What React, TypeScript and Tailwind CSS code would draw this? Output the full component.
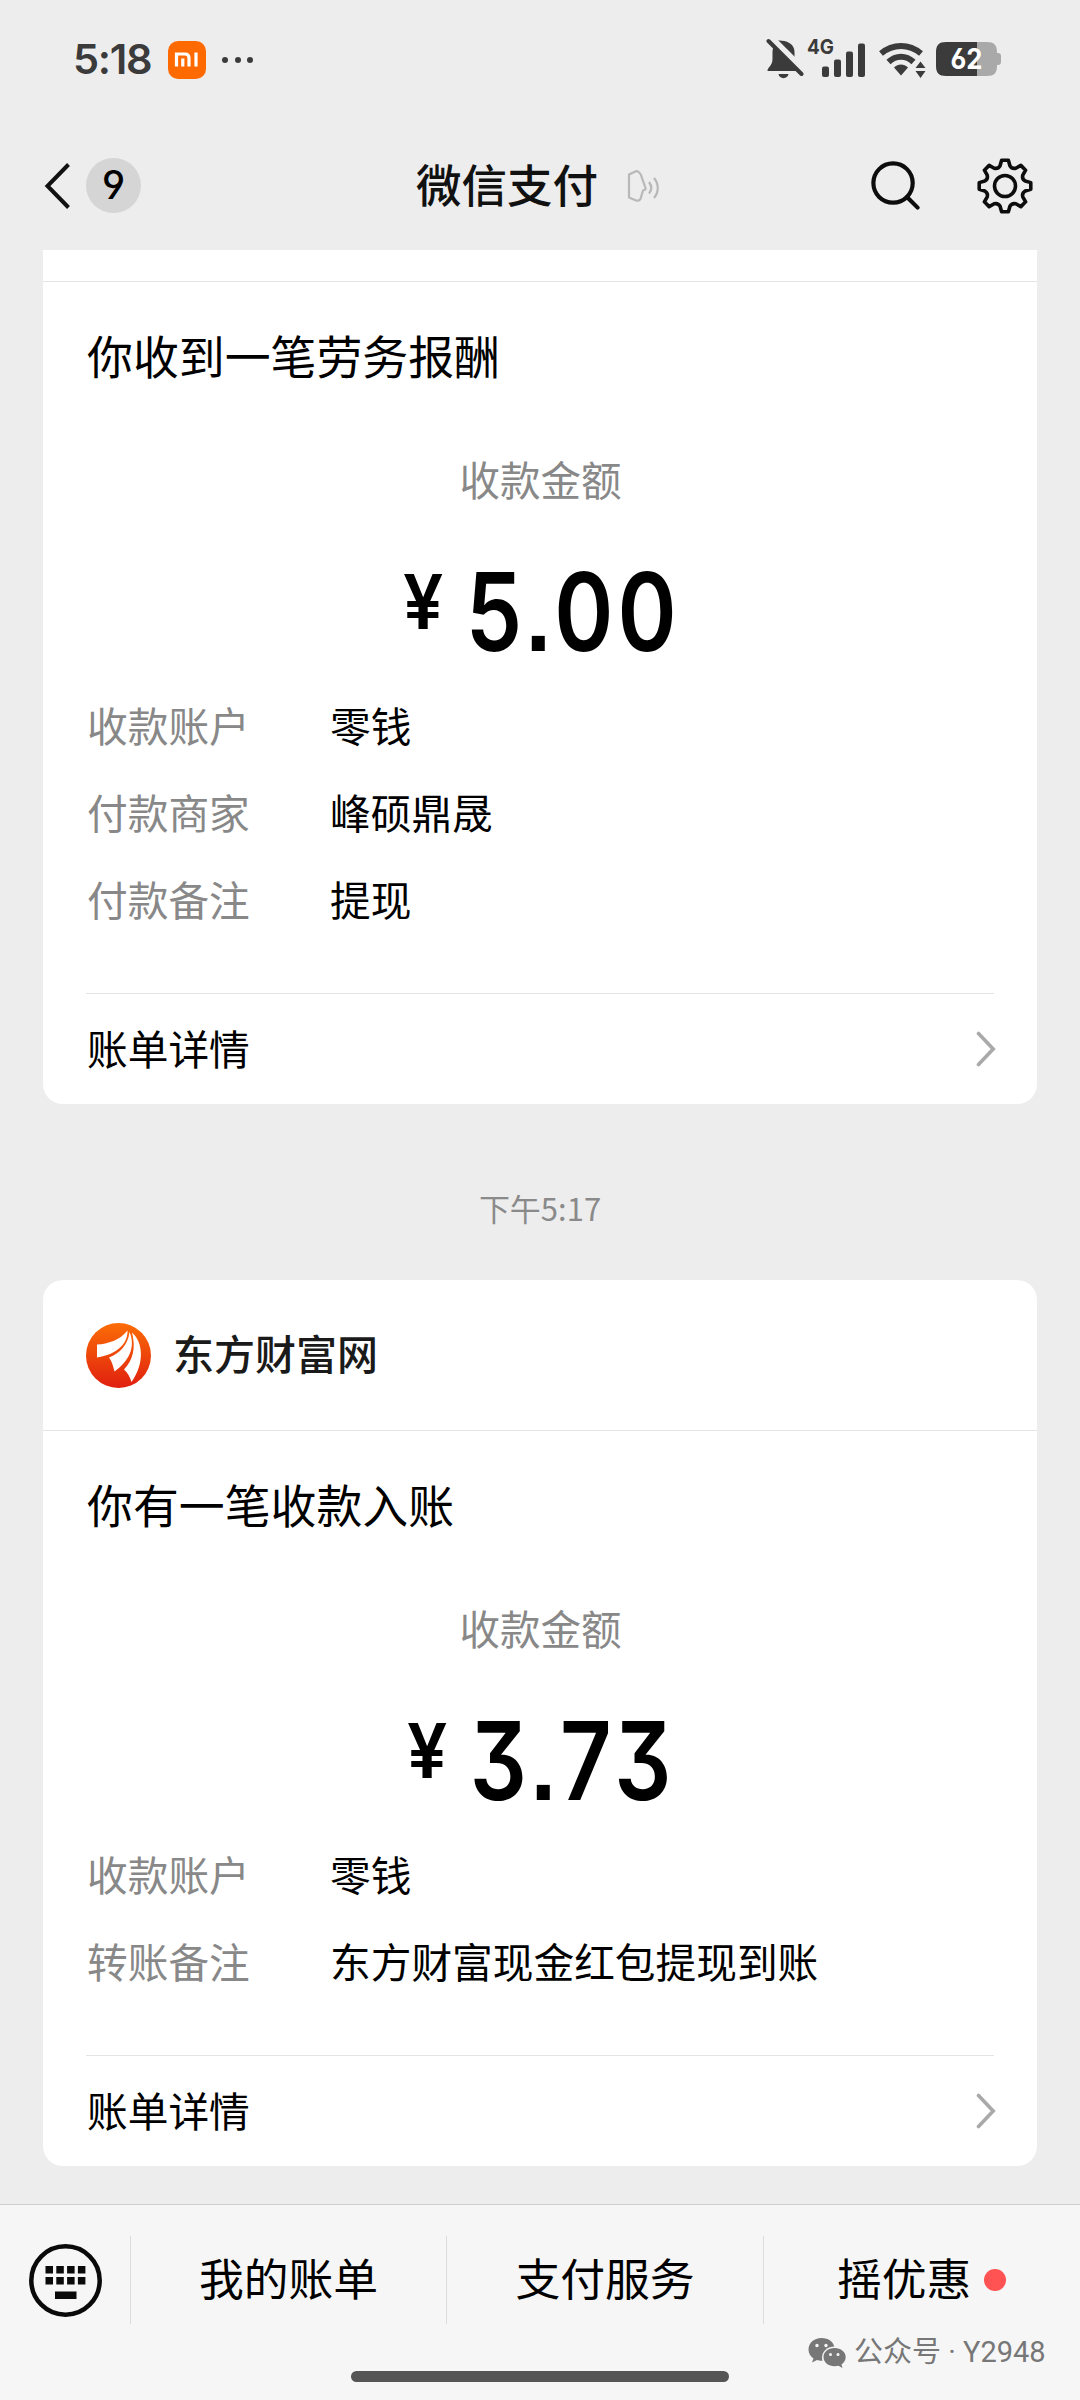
import React from 'react'
import { Search } from 'lucide-react'

interface Row {
  label: string
  value: string
}

interface BillProps {
  title: string
  amount: string
  rows: Row[]
}

function Chevron() {
  return (
    <svg width="20" height="36" viewBox="0 0 20 36" fill="none" className="-mr-[2px] mt-[2px]">
      <path d="M2.500 2.500L17.200 18L2.500 33.500" stroke="#a9a9a9" strokeWidth="3.600" strokeLinecap="round" />
    </svg>
  )
}

function BellOff() {
  return (
    <svg width="38" height="42" viewBox="0 0 38 42" className="shrink-0">
      <path d="M18 3.500C25 3.500 28.500 8 28.500 14V21C28.500 27 32 28 32 33H1.500C1.500 29 6.500 28 6.500 21V14C6.500 8 11 3.500 18 3.500Z" fill="#3b3b3b" />
      <path d="M12.500 36H22.500C22 41.500 13 41.500 12.500 36Z" fill="#3b3b3b" />
      <path d="M0 -4L16 -4L40 20V35L35.500 36L2.500 3Z" fill="#ededed" />
      <path d="M8.500 3.500C12 1.500 28.500 2 28.500 14V24.500Z" fill="#3b3b3b" />
      <path d="M4 -1L37 32" stroke="#ededed" strokeWidth="7" />
      <path d="M2.500 3L35.500 36" stroke="#3b3b3b" strokeWidth="4" strokeLinecap="round" />
    </svg>
  )
}

function Signal() {
  return (
    <svg width="60" height="50" viewBox="0 -4 60 50" className="shrink-0">
      <text x="0" y="16" fontSize="20.500" fontWeight="700" fill="#3b3b3b" fontFamily="Inter, sans-serif" textLength="27" lengthAdjust="spacingAndGlyphs">4G</text>
      <rect x="15" y="28.500" width="7" height="10.500" rx="2" fill="#3b3b3b" />
      <rect x="27" y="21.500" width="7" height="17.500" rx="2" fill="#3b3b3b" />
      <rect x="39" y="13.500" width="7" height="25.500" rx="2" fill="#3b3b3b" />
      <rect x="51" y="5.500" width="7" height="33.500" rx="2" fill="#3b3b3b" />
    </svg>
  )
}

function Wifi() {
  return (
    <svg width="50" height="42" viewBox="0 0 50 42" className="shrink-0">
      <g fill="none" stroke="#3b3b3b" strokeWidth="6">
        <path d="M3 15.500C15 5.500 31 5.500 43 15.500" />
        <path d="M10.500 24C18 17 28 17 35.500 24" />
      </g>
      <path d="M16 29.500C20 25.500 26 25.500 30 29.500L23 37.500Z" fill="#3b3b3b" />
      <path d="M35.500 31V24L42.500 19L48 24V41H35.500Z" fill="#ededed" />
      <path d="M42.500 23.500L47.500 30H37.500Z M42.500 40L47.500 33H37.500Z" fill="#3b3b3b" />
    </svg>
  )
}

function Battery() {
  return (
    <svg width="67" height="36" viewBox="0 0 67 36" className="shrink-0">
      <path d="M41 1H51C58 1 61 4 61 11V12H62C64 12 65 13 65 15V21C65 23 64 24 62 24H61V25C61 32 58 35 51 35H41Z" fill="#a9a9a9" />
      <path d="M41 1H10C3 1 0 4 0 11V25C0 32 3 35 10 35H41Z" fill="#3b3b3b" />
      <text x="14.500" y="28" fontSize="28" fontWeight="700" fill="#fff" fontFamily="Inter, sans-serif" textLength="32" lengthAdjust="spacingAndGlyphs" className="[font-feature-settings:'cv03']">62</text>
    </svg>
  )
}

function Gear() {
  // eight rounded teeth around a hollow hub
  let d = ''
  for (let i = 0; i < 8; i++) {
    const a = (i * Math.PI) / 4 - Math.PI / 2
    const p = (r: number, off: number) => `${(29 + r * Math.cos(a + off)).toFixed(2)} ${(29 + r * Math.sin(a + off)).toFixed(2)}`
    d += `${i === 0 ? 'M' : 'L'}${p(20.8, -0.24)} L${p(26, -0.13)} L${p(26, 0.13)} L${p(20.8, 0.24)} Q${p(18.2, 0.3927)} ${p(20.8, 0.5454)} `
  }
  return (
    <svg width="58" height="58" viewBox="0 0 58 58" fill="none" stroke="#0d0d0d" strokeWidth="3.600" strokeLinejoin="round">
      <path d={d + 'Z'} />
      <circle cx="29" cy="29" r="10.500" />
    </svg>
  )
}

function StatusBar() {
  return (
    <div className="flex h-[120px] items-center pl-[73px] pr-[77px]">
      <span className="w-[79px] whitespace-nowrap font-[Inter] text-[41.500px] font-semibold leading-none tracking-[-1.300px] text-[#3b3b3b]">5:18</span>
      <svg width="38" height="38" viewBox="0 0 38 38" className="ml-4">
        <rect width="38" height="38" rx="10" fill="#ff6a00" />
        <path d="M8.500 25.500V13H17C20 13 21 14.500 21 17V25.500M14.800 25.500V17.500M28 11.500V25.500" fill="none" stroke="#fff" strokeWidth="3.200" />
      </svg>
      <div className="ml-[16px] flex gap-[6.500px] pb-px">
        <i className="size-[6px] rounded-full bg-[#3b3b3b]" />
        <i className="size-[6px] rounded-full bg-[#3b3b3b]" />
        <i className="size-[6px] rounded-full bg-[#3b3b3b]" />
      </div>
      <div className="ml-auto flex items-center pb-[2px]">
        <BellOff />
        <div className="ml-[3px]"><Signal /></div>
        <div className="ml-[11px]"><Wifi /></div>
        <div className="ml-[8px]"><Battery /></div>
      </div>
    </div>
  )
}

function NavBar() {
  return (
    <div className="grid h-[130px] grid-cols-[405px_1fr_226px] items-center pt-px">
      <div className="flex items-center pl-[43px]">
        <svg width="28" height="48" viewBox="0 0 28 48" fill="none">
          <path d="M25.500 2.500L4.500 24L25.500 45.500" stroke="#111" strokeWidth="4" />
        </svg>
        <div className="ml-[15px] flex size-[55px] items-center justify-center rounded-full bg-[#d5d5d5] font-[Inter] text-[39px] font-medium [font-feature-settings:'cv04']">9</div>
      </div>
      <div className="flex items-center pl-[11px]">
        <h1 className="mb-[4px] whitespace-nowrap text-[45.500px] font-medium leading-none text-[#111]">微信支付</h1>
        <svg width="36" height="36" viewBox="0 0 36 36" fill="none" stroke="#b8b8b8" strokeWidth="2.200" className="ml-[28px]" strokeLinejoin="round">
          <path d="M3 6.500L10.500 3C13 3.500 15 6 16 10L19.500 20C20 22 18.500 22 17 22.500L14.500 31C13.500 33 12 33 10 32.500L3 29.500Z" />
          <path d="M23 14C26 18 26 22 23 25.500M28 10C33 16 33 24 28 30" />
        </svg>
      </div>
      <div className="flex items-center pl-[12px]">
        <Search size={59} strokeWidth={1.7} color="#0d0d0d" />
        <div className="ml-[51px]"><Gear /></div>
      </div>
    </div>
  )
}

function Bill({ title, amount, rows }: BillProps) {
  return (
    <div className="pl-[44px] pr-[43px]">
      <h2 className="pt-[41px] text-[45.900px] leading-[62px]">{title}</h2>
      <p className="mt-[64px] text-center text-[40.500px] leading-[60px] text-[#888]">收款金额</p>
      <div className="mt-[49px] flex h-[108px] items-center justify-center font-[Inter] font-semibold">
        <div className="flex origin-center scale-x-[0.83] items-start">
          <span className="mt-[6px] inline-block origin-center scale-x-[1.150] text-[75px] leading-[76px]">¥</span>
          <span className="-mr-[6px] ml-[30px] text-[108px] leading-[108px] tracking-[5px] [font-feature-settings:'cv09','ss07']">{amount}</span>
        </div>
      </div>
      <div className="mt-[15px]">
        {rows.map(r => (
          <div key={r.label} className="flex h-[87px] items-center text-[40.700px]">
            <span className="w-[243px] text-[#888]">{r.label}</span>
            <span>{r.value}</span>
          </div>
        ))}
      </div>
      <div className="-ml-px mt-[51px] flex h-[110px] items-center justify-between border-t border-[#e4e4e4] pb-[2px] pl-px text-[40.700px]">
        <span>账单详情</span>
        <Chevron />
      </div>
    </div>
  )
}

const first: Row[] = [
  { label: '收款账户', value: '零钱' },
  { label: '付款商家', value: '峰硕鼎晟' },
  { label: '付款备注', value: '提现' },
]

const second: Row[] = [
  { label: '收款账户', value: '零钱' },
  { label: '转账备注', value: '东方财富现金红包提现到账' },
]

export default function App() {
  return (
    <div className="relative flex h-[2400px] w-[1080px] flex-col overflow-hidden bg-[#ededed] font-['Noto_Sans_CJK_SC',sans-serif] text-black">
      <StatusBar />
      <NavBar />

      <main className="flex-1 px-[43px]">
        <section className="h-[854px] rounded-b-[20px] bg-white">
          <div className="h-[32px] border-b border-[#e4e4e4]" />
          <Bill title="你收到一笔劳务报酬" amount="5.00" rows={first} />
        </section>

        <p className="flex h-[176px] items-center justify-center pt-[32px] text-[31px] text-[#8a8a8a]">下午5:17</p>

        <section className="h-[886px] rounded-[20px] bg-white">
          <div className="flex h-[151px] items-center border-b border-[#e4e4e4] pl-[43px]">
            <svg width="65" height="65" viewBox="0 0 65 65">
              <defs>
                <linearGradient id="em" x1="0" y1="0" x2="0" y2="1">
                  <stop offset="0" stopColor="#fb6d05" />
                  <stop offset="1" stopColor="#e01f10" />
                </linearGradient>
              </defs>
              <circle cx="32.500" cy="32.500" r="32.500" fill="url(#em)" />
              <path d="M11 21.500C22 21 34 17 41.500 7.500C42 19 33 31 11 34.500Z" fill="#fff" />
              <path d="M23 34.500C34 30 42 22 43.500 9C50 24 43 38 28.500 48.500C27 43 26 38 23 34.500Z" fill="#fff" />
              <path d="M46 9.500C57 19 59 40 45.500 59C44 54 42 50 38 46.500C47 37 50 25 46 9.500Z" fill="#fff" />
            </svg>
            <span className="mb-[4px] ml-[22px] text-[41px] font-medium text-[#1a1a1a]">东方财富网</span>
          </div>
          <Bill title="你有一笔收款入账" amount="3.73" rows={second} />
        </section>
      </main>

      <footer className="h-[196px] border-t border-[#cfcfcf] bg-[#f6f6f6]">
        <div className="flex items-center pt-[31px] text-[44.800px]">
          <div className="flex h-[88px] w-[131px] items-center border-r border-[#dcdcdc] pl-[29px]">
            <svg width="73" height="73" viewBox="0 0 73 73">
              <circle cx="36.500" cy="36.500" r="34.200" fill="none" stroke="#0a0a0a" strokeWidth="4.500" />
              {[16.5, 27.3, 38.1, 48.9].map(x => (
                <g key={x} fill="#0a0a0a">
                  <rect x={x} y="22" width="7.500" height="7.500" />
                  <rect x={x} y="33" width="7.500" height="7.500" />
                </g>
              ))}
              <rect x="26" y="47.500" width="21.500" height="7.500" fill="#0a0a0a" />
            </svg>
          </div>
          <div className="flex h-[88px] w-[316px] items-center justify-center border-r border-[#dcdcdc] pb-[6px]">我的账单</div>
          <div className="flex h-[88px] w-[317px] items-center justify-center border-r border-[#dcdcdc] pb-[6px]">支付服务</div>
          <div className="flex h-[88px] flex-1 items-center pl-[73px]">
            <span className="pb-[6px]">摇优惠</span>
            <i className="ml-[13px] size-[22px] rounded-full bg-[#ff5252]" />
          </div>
        </div>
        <div className="mx-auto mt-[47px] h-[11px] w-[378px] rounded-full bg-[#555]" />
      </footer>

      {/* account tag floating over the footer */}
      <div className="absolute left-[808px] top-[2331px] flex items-center text-[#777]">
        <svg width="38" height="32" viewBox="0 0 38 32">
          <path d="M13.500 1C6 1 .5 6 .5 12.500C.5 16.500 2.500 19.500 5.500 21.500L4 25.500L9 23C10.500 23.500 12 23.700 14 23.700C26 23.500 27 17 26.700 11.500C26 5 20.500 1 13.500 1Z" fill="currentColor" />
          <ellipse cx="26.500" cy="20.500" rx="12.500" ry="11" fill="#f6f6f6" />
          <path d="M26.500 11C20 11 15.500 15 15.500 20C15.500 25.500 20.500 29.200 26.500 29.200C28 29.200 29.500 29 30.500 28.700L34.500 31L33.500 27.500C36 25.700 37.700 23 37.700 20C37.700 15 33 11 26.500 11Z" fill="currentColor" />
          <g fill="#f6f6f6">
            <circle cx="9" cy="8.500" r="1.700" />
            <circle cx="18" cy="8.500" r="1.700" />
            <circle cx="22.500" cy="17.500" r="1.500" />
            <circle cx="30" cy="17.500" r="1.500" />
          </g>
        </svg>
        <span className="ml-[8px] whitespace-nowrap font-['Roboto','Noto_Sans_CJK_SC',sans-serif] text-[29px]">公众号 · Y2948</span>
      </div>
    </div>
  )
}
